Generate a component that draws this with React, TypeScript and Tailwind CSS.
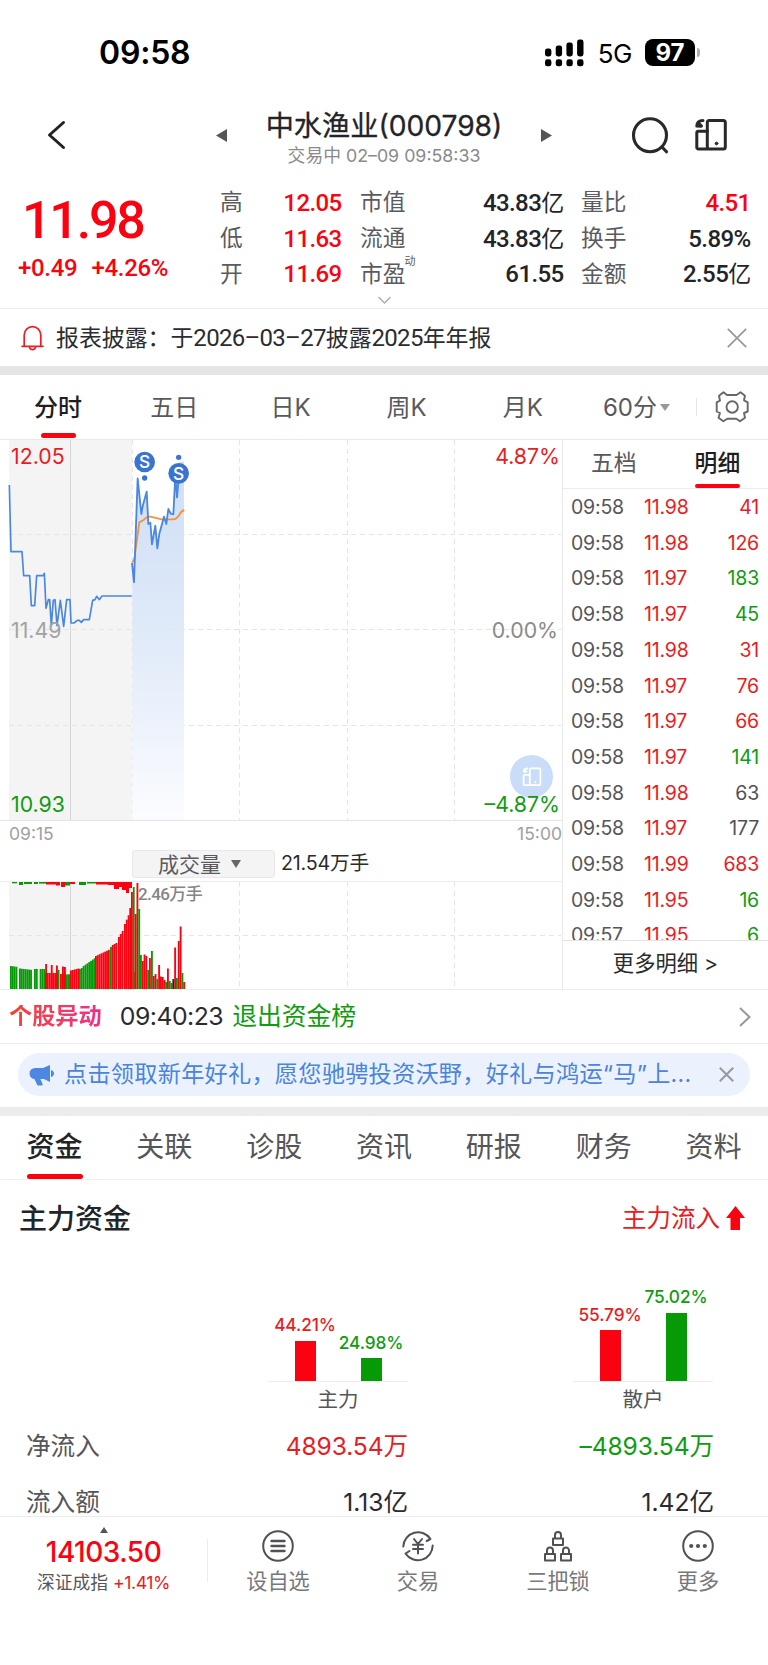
import React from 'react';

const RED = '#fb0210';
const GREEN = '#069a06';

type Quote = { label: string; value: string; tone?: string; sup?: string };

const quoteColumns: { width: string; items: Quote[] }[] = [
  {
    width: 'w-[121px]',
    items: [
      { label: '高', value: '12.05', tone: 'text-[#fb0210]' },
      { label: '低', value: '11.63', tone: 'text-[#fb0210]' },
      { label: '开', value: '11.69', tone: 'text-[#fb0210]' },
    ],
  },
  {
    width: 'w-[203px]',
    items: [
      { label: '市值', value: '43.83亿' },
      { label: '流通', value: '43.83亿' },
      { label: '市盈', value: '61.55', sup: '动' },
    ],
  },
  {
    width: 'w-[169px]',
    items: [
      { label: '量比', value: '4.51', tone: 'text-[#fb0210]' },
      { label: '换手', value: '5.89%' },
      { label: '金额', value: '2.55亿' },
    ],
  },
];

const ticks: [string, string, string, string][] = [
  ['09:58', '11.98', '41', 'text-[#ea1c22]'],
  ['09:58', '11.98', '126', 'text-[#ea1c22]'],
  ['09:58', '11.97', '183', 'text-[#109c10]'],
  ['09:58', '11.97', '45', 'text-[#109c10]'],
  ['09:58', '11.98', '31', 'text-[#ea1c22]'],
  ['09:58', '11.97', '76', 'text-[#ea1c22]'],
  ['09:58', '11.97', '66', 'text-[#ea1c22]'],
  ['09:58', '11.97', '141', 'text-[#109c10]'],
  ['09:58', '11.98', '63', 'text-[#505256]'],
  ['09:58', '11.97', '177', 'text-[#505256]'],
  ['09:58', '11.99', '683', 'text-[#ea1c22]'],
  ['09:58', '11.95', '16', 'text-[#109c10]'],
  ['09:57', '11.95', '6', 'text-[#109c10]'],
];

// x, height, colour
const volumeBars: [number, number, string][] = [];
const addRun = (from: number, to: number, h0: number, h1: number, color: string) => {
  const n = Math.max(1, Math.round((to - from) / 1.85));
  for (let i = 0; i < n; i++) {
    volumeBars.push([from + i * 1.85, h0 + ((h1 - h0) * i) / n, color]);
  }
};
addRun(10, 17, 23, 22, GREEN);
addRun(19, 32, 20.5, 19, GREEN);
addRun(34, 38, 20, 20, GREEN);
addRun(39.7, 45, 20, 20, GREEN);
addRun(45, 58, 16, 16, RED);
addRun(57.6, 60, 19, 17, GREEN);
addRun(60, 65, 15, 16, RED);
addRun(65.3, 70, 14.5, 15, GREEN);
addRun(70, 79, 18.5, 21, RED);
addRun(79, 83, 20, 22, GREEN);
addRun(82.7, 95, 23, 32, GREEN);
addRun(95, 110, 33, 40, RED);
addRun(110, 112, 42, 42, GREEN);
addRun(111.8, 118, 44, 47, RED);
addRun(118, 124, 52, 61, RED);
addRun(124, 129.5, 65, 78, RED);
volumeBars.push(
  [45.2, 25, RED], [50.8, 24, RED], [56, 23.5, RED], [62, 22.5, RED], [64, 22, RED],
  [129.3, 81, RED], [131, 97, RED], [133, 17, RED], [132.8, 102, GREEN], [134.7, 75, RED],
  [136.5, 106, RED], [138.3, 80, GREEN], [140, 34, GREEN], [141.8, 28, RED], [143.6, 34.5, RED],
  [145.4, 33, RED], [147.2, 19, GREEN], [149, 31, RED], [151, 38, GREEN], [152.8, 13, RED],
  [154.6, 15, RED], [156.4, 10, GREEN], [158.2, 24, RED], [160, 12.5, RED], [161.8, 12, RED],
  [163.6, 9, RED], [165.2, 7, GREEN], [167, 20.5, RED], [168.8, 8, GREEN], [170.6, 6, GREEN],
  [172.4, 10, '#222'], [174.2, 41.5, RED], [176, 11, GREEN], [177.8, 48, RED], [179.7, 62.5, RED],
  [181.5, 16, GREEN], [183.3, 7, RED],
);

// unmatched volume, hangs from the top edge
const topBars: [number, number, number, string][] = [
  [12, 5, 1.3, GREEN], [19, 4, 3, GREEN], [24, 8, 2, GREEN], [34, 4, 2, GREEN], [39, 7, 1.6, GREEN],
  [46, 10, 2.5, RED], [56, 4, 3.5, RED], [61, 4, 5, RED], [65, 5, 3.5, GREEN], [70, 5, 2, RED],
  [79, 7, 3, GREEN], [87, 9, 1.5, GREEN], [96, 12, 2.5, RED], [108, 6, 3, RED], [114, 5, 7, RED],
  [119, 4, 5, RED], [122, 4, 8, RED], [126, 3, 11, RED], [129, 3, 6, RED],
];

const dash = { stroke: '#e5e5e7', strokeWidth: 1, strokeDasharray: '5 4' };

const RotateIcon: React.FC<{ className: string }> = ({ className }) => (
  <svg className={className} viewBox="0 0 34 34" fill="none" stroke="currentColor" strokeWidth="3" strokeLinecap="round" strokeLinejoin="round">
    <rect x="13.3" y="2.500" width="18" height="28.500" rx="2" />
    <path d="M13.300 13.300H4.300a1.500 1.500 0 0 0-1.500 1.500v14.700a1.500 1.500 0 0 0 1.500 1.500h9" />
    <path d="M9 2.500C5.500 2.500 3 4.500 2.800 8L7 8.300M5 5.500l2.500 2.500" />
    <circle cx="22.500" cy="25.500" r="1.400" fill="currentColor" strokeWidth="0.800" />
  </svg>
);

const StatusBar = () => (
  <div className="flex h-[103px] items-center pl-[99px] pr-[68px] pt-[2px]">
    <span className="text-[32px] font-semibold leading-none tracking-[-0.2px] text-black">09:58</span>
    <svg className="ml-auto h-[28px] w-[40px]" viewBox="0 0 40 28" fill="#000">
      {[0, 1, 2, 3].map((i) => (
        <g key={i}>
          <rect x={i * 10.7} y={9.5 - i * 3} width="6.4" height={8 + i * 3} rx="2.4" />
          <rect x={i * 10.7} y="20.3" width="6.4" height="7" rx="2.4" />
        </g>
      ))}
    </svg>
    <span className="ml-[13px] mt-[2px] text-[26px] leading-none tracking-[-0.5px] text-black">5G</span>
    <span className="ml-[13px] flex h-[27px] w-[50px] items-center justify-center rounded-[8px] bg-black text-[24px] font-bold leading-none text-white">97</span>
    <span className="ml-[2px] h-[9px] w-[3px] rounded-r-full bg-[#b0b0b0]" />
  </div>
);

const Header = () => (
  <div className="flex h-[77px] items-start">
    <svg className="ml-[47px] mt-[17px] h-[30px] w-[19px]" viewBox="0 0 19 30" fill="none" stroke="#222" strokeWidth="3" strokeLinecap="round" strokeLinejoin="round">
      <path d="M16.5 2.5 2.5 15l14 12.5" />
    </svg>
    <svg className="ml-[150px] mt-[26px] h-[13px] w-[11px]" viewBox="0 0 11 13" fill="#555"><path d="M11 0v13L0 6.5z" /></svg>
    <div className="flex w-[314px] flex-col items-center pt-[7px]">
      <h1 className="whitespace-nowrap text-[28.200px] leading-[32px] text-[#222427] [-webkit-text-stroke:0.300px_#222427]">中水渔业(000798)</h1>
      <p className="mt-[4px] whitespace-nowrap text-[17.800px] leading-[20px] text-[#8a8a8c]">交易中 02–09 09:58:33</p>
    </div>
    <svg className="mt-[26px] h-[13px] w-[11px]" viewBox="0 0 11 13" fill="#555"><path d="M0 0v13l11-6.5z" /></svg>
    <svg className="ml-[79px] mt-[13px] h-[40px] w-[40px]" viewBox="0 0 40 40" fill="none" stroke="#28292c" strokeWidth="3.100" strokeLinecap="round">
      <circle cx="19" cy="19.300" r="16.500" />
      <path d="m31 31 4.500 4.800" />
    </svg>
    <RotateIcon className="ml-[23px] mt-[15px] h-[34px] w-[34px] text-[#28292c]" />
  </div>
);

const QuotePanel = () => (
  <div className="flex h-[129px] border-b border-[#ededee]">
    <div className="w-[220px] pl-[18px] font-[Roboto] text-[#fb0210]">
      <p className="pl-[4px] pt-[15px] text-[52px] font-medium leading-[52px] tracking-[-2.200px]">11.98</p>
      <p className="mt-[9px] flex gap-[14px] text-[24px] font-medium leading-[24px] tracking-[-0.3px]">
        <span>+0.49</span>
        <span>+4.26%</span>
      </p>
    </div>
    {quoteColumns.map((col, i) => (
      <div key={i} className={i === 0 ? 'mr-[19px]' : i === 1 ? 'mr-[18px]' : ''}>
        <div className={`${col.width} pt-[5px]`}>
          {col.items.map((q) => (
            <div key={q.label} className="flex h-[35.7px] items-center justify-between text-[22.700px] leading-none">
              <span className="relative text-[#5a5b5f]">
                {q.label}
                {q.sup && <span className="absolute -right-[10px] -top-[7px] text-[11px]">{q.sup}</span>}
              </span>
              <span className={`-mr-[0.600px] font-[Roboto,'Noto_Sans_CJK_SC'] text-[24px] font-medium tracking-[-0.600px] ${q.tone || 'text-[#222427]'}`}>
                {q.value.replace('亿', '')}
                {q.value.endsWith('亿') && <span className="text-[23px] font-normal">亿</span>}
              </span>
            </div>
          ))}
        </div>
        {i === 1 && (
          <svg className="ml-[18px] mt-[4px] h-[8px] w-[13px]" viewBox="0 0 13 8" fill="none" stroke="#aaa" strokeWidth="1.3">
            <path d="m.5 1 6 6 6-6" />
          </svg>
        )}
      </div>
    ))}
  </div>
);

const Notice = () => (
  <div className="flex h-[57px] items-center pl-[21px] pr-[21px]">
    <svg className="h-[26px] w-[23px]" viewBox="0 0 23 26" fill="none" stroke="#ee1c25" strokeWidth="1.7" strokeLinecap="round">
      <path d="M3.2 21V10a8.3 8.3 0 0 1 16.6 0v11M1 21.3h21M8.5 22c.5 3.6 5.5 3.6 6 0" />
    </svg>
    <p className="ml-[12px] whitespace-nowrap pt-[1px] text-[22.900px] leading-none text-[#2b2c30]">
      报表披露：于<span className="font-[Roboto] text-[24px] tracking-[-0.700px]">2026–03–27</span>披露<span className="font-[Roboto] text-[24px] tracking-[-0.700px]">2025</span>年年报
    </p>
    <svg className="ml-auto h-[20px] w-[20px]" viewBox="0 0 20 20" stroke="#9a9a9c" strokeWidth="1.8"><path d="m.8.8 18.4 18.4M19.2.8.8 19.2" /></svg>
  </div>
);

const PeriodTabs = () => (
  <div className="flex h-[65px] items-center border-b border-[#e9e9ea] text-[24px] leading-none text-[#58595d]">
    {['分时', '五日', '日K', '周K', '月K'].map((tab, i) => (
      <div key={tab} className={`relative flex h-full w-[116.200px] items-center justify-center pt-[2px] ${i === 0 ? 'font-medium text-[#1d1e20]' : ''}`}>
        {tab}
        {i === 0 && <span className="absolute bottom-[1px] h-[5px] w-[35px] rounded-full bg-[#fb0210]" />}
      </div>
    ))}
    <div className="ml-[22px] flex items-center">
      <span className="pt-[2px]">60分</span>
      <svg className="ml-[3px] h-[7px] w-[10px]" viewBox="0 0 10 7" fill="#999"><path d="M0 0h10L5 7z" /></svg>
    </div>
    <span className="ml-auto h-[18px] w-px bg-[#e6e6e6]" />
    <svg className="ml-[18px] mr-[19px] mt-[-1px] h-[34px] w-[34px]" viewBox="0 0 34 34" fill="none" stroke="#67686c" strokeWidth="1.900" strokeLinejoin="round">
      <path d="M8.500 2.300 12 5h9.500l4-2.700L30 5.700l-1 4.600 3.700 2v9.200L29 23l1 4.700-5 3.600-3.700-2.600h-9l-4 2.600-4.800-3.600L5 23l-3.300-1.500v-9.200L5 10.700l-1-5z" />
      <circle cx="17.200" cy="17" r="5.700" />
    </svg>
  </div>
);

const PriceChart = () => (
  <div className="relative h-[381px] border-b border-[#e6e6e8] text-[21.300px] leading-none">
    <svg className="block h-[380px] w-[562px]" viewBox="0 0 562 380" fill="none">
      <defs>
        <linearGradient id="area" x1="0" y1="0" x2="0" y2="1">
          <stop offset="0" stopColor="#c9dbf5" />
          <stop offset="0.5" stopColor="#dde8f8" />
          <stop offset="1" stopColor="#fbfcff" />
        </linearGradient>
      </defs>
      <rect x="9" y="0" width="123" height="380" fill="#f4f4f4" />
      <path d="M70.5 0v380" stroke="#d6d6da" />
      <path d="M132.5 0v380M239.5 0v380M347.5 0v380M454.5 0v380M9 94.5h552M9 189.5h552M9 285.5h552" {...dash} />
      <g transform="translate(0 -65) scale(0.33333)" strokeLinejoin="round">
        <path d="M397 1335V560L402 620 413 310 424 417 440 350 447 447 456 508 466 452 472 520 478 476 492 425 499 447 505 402 520 418 526 270 530 367 537 260H552V1335z" fill="url(#area)" opacity="0.9" />
        <path d="M396 562c10-4 8-25 11-40l11-80c8-6 12-4 18-12 8-8 18-5 24-3l25 6h36c20-4 16-25 32-28" stroke="#f8913a" strokeWidth="5.5" />
        <path d="M28 330 33 530H66L71 602H89L94 692H104L110 602H129L133 595 138 700 145 674 149 674 154 752 160 676 165 674 171 752 181 676 191 754 200 674H210L213 744H222L232 736 238 736 244 742 251 734H268L278 676 285 674 290 664 298 674 306 663H395" stroke="#4b87df" strokeWidth="5" />
        <path d="M396 564 402 622 413 310 424 417 429 390 440 350 445 447 451 443 456 508 466 452 472 520 478 476 492 425 499 447 505 402 512 416 520 418 526 300 531 367 537 300" stroke="#4b87df" strokeWidth="5.500" />
        <g fill="#3a74d0">
          <circle cx="434" cy="261" r="31" />
          <circle cx="434" cy="309" r="8" />
          <circle cx="536" cy="247" r="8" />
          <circle cx="536" cy="295" r="31" />
        </g>
        <g fill="#fff" fontSize="52" fontWeight="500" textAnchor="middle">
          <text x="434" y="280">S</text>
          <text x="536" y="314">S</text>
        </g>
      </g>
    </svg>
    <span className="absolute left-[11px] top-[6px] text-[#ea1c22]">12.05</span>
    <span className="absolute right-[2px] top-[6px] text-[#ea1c22]">4.87%</span>
    <span className="absolute left-[11px] top-[180px] text-[#a2a2a2]">11.49</span>
    <span className="absolute right-[4px] top-[180px] text-[#8a8a8a]">0.00%</span>
    <span className="absolute right-[9px] top-[315px] flex h-[43px] w-[43px] items-center justify-center rounded-full bg-[#c9dcf8]">
      <RotateIcon className="h-[20px] w-[20px] text-white" />
    </span>
    <span className="absolute bottom-[5px] left-[11px] text-[#109c10]">10.93</span>
    <span className="absolute bottom-[5px] right-[2px] text-[#109c10]">–4.87%</span>
  </div>
);

const VolumeChart = () => (
  <div>
    <div className="flex h-[26px] items-center justify-between pl-[9px] text-[17.500px] leading-none text-[#9fa0a3]">
      <span>09:15</span>
      <span>15:00</span>
    </div>
    <div className="flex h-[35px] items-center border-b border-[#ececee] pl-[132px]">
      <div className="flex h-[28px] w-[143px] items-center justify-center gap-[10px] rounded-[3px] border border-[#e9e9eb] bg-[#f4f4f5] pr-[8px] text-[21px] leading-none text-[#5a5b5f]">
        成交量
        <svg className="h-[8px] w-[10px]" viewBox="0 0 10 8" fill="#666"><path d="M0 0h10L5 8z" /></svg>
      </div>
      <span className="ml-[6px] text-[19.700px] leading-none tracking-[-0.2px] text-[#2a2b2e]">21.54万手</span>
    </div>
    <div className="relative h-[107px]">
      <svg className="block h-[107px] w-[562px]" viewBox="0 0 562 107">
        <rect x="9" y="0" width="123" height="107" fill="#f4f4f4" />
        <path d="M70.5 0v107" stroke="#d6d6da" />
        <path d="M239.5 0v107M347.5 0v107M454.5 0v107M9 53.5h552" {...dash} />
        {topBars.map(([x, w, h, color]) => (
          <rect key={x} x={x} y="0" width={w} height={h} fill={color} />
        ))}
        {volumeBars.map(([x, h, color], i) => (
          <rect key={i} x={x} y={107 - h} width="1.85" height={h} fill={color} />
        ))}
      </svg>
      <span className="absolute left-[138px] top-[4px] font-[Roboto,'Noto_Sans_CJK_SC'] text-[17px] font-medium leading-none tracking-[-0.600px] text-[#858587]">2.46万手</span>
    </div>
  </div>
);

const TickPanel = () => (
  <div className="w-[206px] border-l border-[#e9e9ea]">
    <div className="flex h-[49px] items-center border-b border-[#ececee] text-[22.800px] leading-none">
      <span className="ml-[28px] pb-[2px] text-[#58595d]">五档</span>
      <span className="relative ml-[58px] flex h-full items-center pb-[2px] font-medium text-[#1d1e20]">
        明细
        <span className="absolute bottom-0 left-0 h-[4px] w-full rounded-full bg-[#fb0210]" />
      </span>
    </div>
    <div className="h-[452px] overflow-hidden border-b border-[#e4e4e6] pt-[1px]">
      {ticks.map(([time, price, qty, tone], i) => (
        <div key={i} className="flex h-[35.7px] items-center pl-[8px] pr-[9px] text-[19.5px] leading-none tracking-[-0.2px]">
          <span className="w-[73px] text-[#55565a]">{time}</span>
          <span className="text-[#ea1c22]">{price}</span>
          <span className={`ml-auto ${tone}`}>{qty}</span>
        </div>
      ))}
    </div>
    <div className="flex h-[46px] items-center justify-center text-[21.3px] leading-none text-[#2a2b2e]">更多明细 &gt;</div>
  </div>
);

const EventRow = () => (
  <div className="flex h-[55px] items-center border-b border-t border-[#ececee] pl-[9px] pr-[17px] text-[24.800px] leading-none">
    <span className="bg-gradient-to-r from-[#f5432a] to-[#ee2f86] bg-clip-text text-[23.200px] font-bold text-transparent">个股异动</span>
    <span className="ml-[18px] tracking-[-0.5px] text-[#2a2b2e]">09:40:23</span>
    <span className="ml-[9px] text-[#109c10]">退出资金榜</span>
    <svg className="ml-auto h-[20px] w-[12px]" viewBox="0 0 12 20" fill="none" stroke="#999" strokeWidth="2"><path d="m1 1 9.5 9L1 19" /></svg>
  </div>
);

const PromoBanner = () => (
  <div className="mx-[18px] mb-[11px] mt-[9px] flex h-[43px] items-center rounded-full bg-[#ebf2fd] pl-[11px] pr-[16px]">
    <svg className="h-[22px] w-[26px]" viewBox="0 0 26 22" fill="#4d87e2">
      <path d="M21 1v17l-6-3H6a5.5 5.5 0 0 1 0-11h8z" />
      <path d="M5 14h6l2.5 6c.4 1-.2 1.500-1 1.500H9.500c-.8 0-1.200-.3-1.500-1zM22 6c4 1 4 6 0 7z" />
    </svg>
    <p className="ml-[9px] whitespace-nowrap text-[23.200px] leading-none tracking-[0.240px] text-[#4a84dc]">点击领取新年好礼，愿您驰骋投资沃野，好礼与鸿运“马”上...</p>
    <svg className="ml-auto h-[15px] w-[15px]" viewBox="0 0 15 15" stroke="#96999e" strokeWidth="2"><path d="m.8.8 13.400 13.400M14.200.8.8 14.200" /></svg>
  </div>
);

const InfoTabs = () => (
  <div className="flex h-[64px] justify-between border-b border-[#f0f0f1] px-[26.500px] text-[28px] leading-none text-[#55565a]">
    {['资金', '关联', '诊股', '资讯', '研报', '财务', '资料'].map((tab, i) => (
      <div key={tab} className={`relative flex h-full items-center pb-[2px] ${i === 0 ? 'font-medium text-[#222427]' : ''}`}>
        {tab}
        {i === 0 && <span className="absolute bottom-0 left-0 h-[5px] w-full rounded-full bg-[#fb0210]" />}
      </div>
    ))}
  </div>
);

const flowGroups = [
  { name: '主力', inflow: 44.21, outflow: 24.98, margin: 'ml-[268px]' },
  { name: '散户', inflow: 55.79, outflow: 75.02, margin: 'ml-[165px]' },
];

const MoneyFlow = () => (
  <div className="h-[336px] overflow-hidden">
    <div className="flex h-[77px] items-center pl-[19px] pr-[23px] leading-none">
      <h2 className="text-[28px] font-medium text-[#222427]">主力资金</h2>
      <span className="ml-auto text-[24.5px] text-[#ea1c22]">主力流入</span>
      <svg className="ml-[6px] mt-[-2px] h-[24px] w-[19px]" viewBox="0 0 19 24" fill={RED}><path d="M9.500 0 19 12h-5v12H4.500V12H0z" /></svg>
    </div>
    <div className="flex">
      {flowGroups.map((g) => (
        <div key={g.name} className={`w-[140px] ${g.margin}`}>
          <div className="flex h-[125px] items-end justify-center gap-[1px] border-b border-[#ececee] text-[17.300px] font-medium leading-none tracking-[-0.1px]">
            <div className="flex w-[65px] flex-col items-center text-[#ea1c22]">
              {g.inflow.toFixed(2)}%
              <span className="mt-[7px] w-[21px] bg-[#fb0210]" style={{ height: g.inflow * 0.91 }} />
            </div>
            <div className="flex w-[65px] flex-col items-center text-[#109c10]">
              {g.outflow.toFixed(2)}%
              <span className="mt-[7px] w-[21px] bg-[#069a06]" style={{ height: g.outflow * 0.91 }} />
            </div>
          </div>
          <p className="mt-[7px] text-center text-[20.500px] leading-[22px] text-[#55565a]">{g.name}</p>
        </div>
      ))}
    </div>
    <div className="mt-[7px] text-[24.600px] leading-none">
      <div className="flex h-[56px] items-center pl-[26px]">
        <span className="w-[141px] text-[#55565a]">净流入</span>
        <span className="w-[241px] text-right tracking-[-0.100px] text-[#ea1c22]">4893.54万</span>
        <span className="w-[306px] text-right tracking-[-0.100px] text-[#109c10]">–4893.54万</span>
      </div>
      <div className="flex h-[56px] items-center pl-[26px] text-[#2a2b2e]">
        <span className="w-[141px] text-[#55565a]">流入额</span>
        <span className="w-[241px] text-right">1.13亿</span>
        <span className="w-[306px] text-right">1.42亿</span>
      </div>
    </div>
  </div>
);

const navItems = [
  {
    label: '设自选',
    icon: (
      <>
        <circle cx="17" cy="17" r="14.800" />
        <path d="M10.500 12h13M10.500 17h13M10.500 22h13" strokeWidth="2.400" />
      </>
    ),
  },
  {
    label: '交易',
    icon: (
      <>
        <path d="M2.300 17.500A14.800 14.800 0 0 1 29.500 10l-3.800 2M31.700 16.500A14.800 14.800 0 0 1 4.500 24.500l4-2.500" />
        <path d="m13 10 4 5 4-5M17 15v9.500M12 15.800h10M12 20h10" />
      </>
    ),
  },
  {
    label: '三把锁',
    icon: (
      <path d="M12 9.500h10v6.500H12zM14 9V6a3 3 0 0 1 6 0v3M4 25h10v6.500H4zM6 25v-3.500a3 3 0 0 1 6 0V25M20 25h10v6.500H20zM22 25v-3.500a3 3 0 0 1 6 0V25" />
    ),
  },
  {
    label: '更多',
    icon: (
      <>
        <circle cx="17" cy="17" r="14.800" />
        <g fill="#505158" stroke="none">
          <circle cx="10.200" cy="17" r="2.100" />
          <circle cx="17" cy="17" r="2.100" />
          <circle cx="23.800" cy="17" r="2.100" />
        </g>
      </>
    ),
  },
];

const BottomNav = () => (
  <div className="flex h-[149px] border-t border-[#ebebed]">
    <div className="flex w-[207px] flex-col items-center pt-[10px] leading-none">
      <svg className="h-[6px] w-[8px]" viewBox="0 0 8 6" fill="#555"><path d="M4 0l4 6H0z" /></svg>
      <span className="mt-[6px] text-[28px] font-medium leading-[27px] tracking-[-0.500px] text-[#fb0210]">14103.50</span>
      <span className="mt-[7px] whitespace-nowrap text-[17.800px] leading-[20px] text-[#55565a]">
        深证成指 <span className="tracking-[-0.500px] text-[#ea1c22]">+1.41%</span>
      </span>
    </div>
    <span className="mt-[22px] h-[43px] w-px bg-[#ececee]" />
    {navItems.map((item) => (
      <div key={item.label} className="flex w-[140px] flex-col items-center pt-[12px]">
        <svg className="h-[34px] w-[34px]" viewBox="0 0 34 34" fill="none" stroke="#505158" strokeWidth="2" strokeLinecap="round" strokeLinejoin="round">
          {item.icon}
        </svg>
        <span className="mt-[7px] text-[21.200px] leading-[22px] text-[#77787c]">{item.label}</span>
      </div>
    ))}
  </div>
);

const App: React.FC = () => {
  return (
    <div className="h-[1665px] w-[768px] overflow-hidden bg-white font-[Inter,'Noto_Sans_CJK_SC',sans-serif]">
      <StatusBar />
      <Header />
      <QuotePanel />
      <Notice />
      <div className="h-[9px] bg-[#e5e5e8]" />
      <PeriodTabs />
      <div className="flex h-[549px]">
        <div className="w-[562px]">
          <PriceChart />
          <VolumeChart />
        </div>
        <TickPanel />
      </div>
      <EventRow />
      <PromoBanner />
      <div className="h-[9px] bg-[#ececec]" />
      <InfoTabs />
      <MoneyFlow />
      <BottomNav />
    </div>
  );
};

export default App;
